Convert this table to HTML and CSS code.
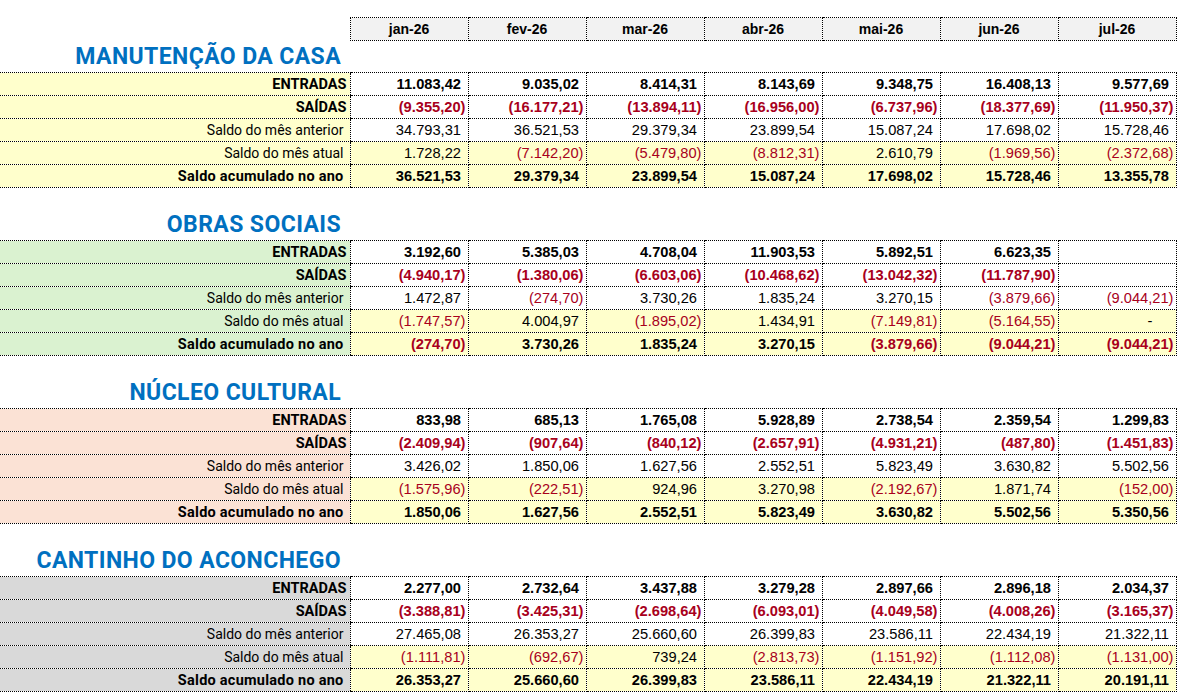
FILE: index.html
```html
<!DOCTYPE html>
<html lang="pt-BR">
<head>
<meta charset="utf-8">
<title>Planilha</title>
<link rel="stylesheet" href="styles.css">
</head>
<body>
<table class="sheet">
  <colgroup>
    <col class="c-label">
    <col class="c-month"><col class="c-month"><col class="c-month"><col class="c-month"><col class="c-month"><col class="c-month"><col class="c-month">
  </colgroup>
  <thead>
    <tr class="hdr">
      <td class="corner"></td>
      <th>jan-26</th><th>fev-26</th><th>mar-26</th><th>abr-26</th><th>mai-26</th><th>jun-26</th><th>jul-26</th>
    </tr>
  </thead>

  <tbody class="sec sec-yellow">
    <tr class="title-row"><td class="title">MANUTENÇÃO DA CASA</td><td colspan="7"></td></tr>
    <tr class="row"><td class="lbl strong">ENTRADAS</td>
      <td class="v b pos">11.083,42</td><td class="v b pos">9.035,02</td><td class="v b pos">8.414,31</td><td class="v b pos">8.143,69</td><td class="v b pos">9.348,75</td><td class="v b pos">16.408,13</td><td class="v b pos">9.577,69</td></tr>
    <tr class="row"><td class="lbl strong">SAÍDAS</td>
      <td class="v b neg">(9.355,20)</td><td class="v b neg">(16.177,21)</td><td class="v b neg">(13.894,11)</td><td class="v b neg">(16.956,00)</td><td class="v b neg">(6.737,96)</td><td class="v b neg">(18.377,69)</td><td class="v b neg">(11.950,37)</td></tr>
    <tr class="row"><td class="lbl">Saldo do mês anterior</td>
      <td class="v pos">34.793,31</td><td class="v pos">36.521,53</td><td class="v pos">29.379,34</td><td class="v pos">23.899,54</td><td class="v pos">15.087,24</td><td class="v pos">17.698,02</td><td class="v pos">15.728,46</td></tr>
    <tr class="row hl"><td class="lbl">Saldo do mês atual</td>
      <td class="v pos">1.728,22</td><td class="v neg">(7.142,20)</td><td class="v neg">(5.479,80)</td><td class="v neg">(8.812,31)</td><td class="v pos">2.610,79</td><td class="v neg">(1.969,56)</td><td class="v neg">(2.372,68)</td></tr>
    <tr class="row hl"><td class="lbl semi">Saldo acumulado no ano</td>
      <td class="v b pos">36.521,53</td><td class="v b pos">29.379,34</td><td class="v b pos">23.899,54</td><td class="v b pos">15.087,24</td><td class="v b pos">17.698,02</td><td class="v b pos">15.728,46</td><td class="v b pos">13.355,78</td></tr>
  </tbody>

  <tbody class="sec sec-green">
    <tr class="gap"><td colspan="8"></td></tr>
    <tr class="title-row"><td class="title">OBRAS SOCIAIS</td><td colspan="7"></td></tr>
    <tr class="row"><td class="lbl strong">ENTRADAS</td>
      <td class="v b pos">3.192,60</td><td class="v b pos">5.385,03</td><td class="v b pos">4.708,04</td><td class="v b pos">11.903,53</td><td class="v b pos">5.892,51</td><td class="v b pos">6.623,35</td><td class="v b pos"></td></tr>
    <tr class="row"><td class="lbl strong">SAÍDAS</td>
      <td class="v b neg">(4.940,17)</td><td class="v b neg">(1.380,06)</td><td class="v b neg">(6.603,06)</td><td class="v b neg">(10.468,62)</td><td class="v b neg">(13.042,32)</td><td class="v b neg">(11.787,90)</td><td class="v b neg"></td></tr>
    <tr class="row"><td class="lbl">Saldo do mês anterior</td>
      <td class="v pos">1.472,87</td><td class="v neg">(274,70)</td><td class="v pos">3.730,26</td><td class="v pos">1.835,24</td><td class="v pos">3.270,15</td><td class="v neg">(3.879,66)</td><td class="v neg">(9.044,21)</td></tr>
    <tr class="row hl"><td class="lbl">Saldo do mês atual</td>
      <td class="v neg">(1.747,57)</td><td class="v pos">4.004,97</td><td class="v neg">(1.895,02)</td><td class="v pos">1.434,91</td><td class="v neg">(7.149,81)</td><td class="v neg">(5.164,55)</td><td class="v dash">-</td></tr>
    <tr class="row hl"><td class="lbl semi">Saldo acumulado no ano</td>
      <td class="v b neg">(274,70)</td><td class="v b pos">3.730,26</td><td class="v b pos">1.835,24</td><td class="v b pos">3.270,15</td><td class="v b neg">(3.879,66)</td><td class="v b neg">(9.044,21)</td><td class="v b neg">(9.044,21)</td></tr>
  </tbody>

  <tbody class="sec sec-salmon">
    <tr class="gap"><td colspan="8"></td></tr>
    <tr class="title-row"><td class="title">NÚCLEO CULTURAL</td><td colspan="7"></td></tr>
    <tr class="row"><td class="lbl strong">ENTRADAS</td>
      <td class="v b pos">833,98</td><td class="v b pos">685,13</td><td class="v b pos">1.765,08</td><td class="v b pos">5.928,89</td><td class="v b pos">2.738,54</td><td class="v b pos">2.359,54</td><td class="v b pos">1.299,83</td></tr>
    <tr class="row"><td class="lbl strong">SAÍDAS</td>
      <td class="v b neg">(2.409,94)</td><td class="v b neg">(907,64)</td><td class="v b neg">(840,12)</td><td class="v b neg">(2.657,91)</td><td class="v b neg">(4.931,21)</td><td class="v b neg">(487,80)</td><td class="v b neg">(1.451,83)</td></tr>
    <tr class="row"><td class="lbl">Saldo do mês anterior</td>
      <td class="v pos">3.426,02</td><td class="v pos">1.850,06</td><td class="v pos">1.627,56</td><td class="v pos">2.552,51</td><td class="v pos">5.823,49</td><td class="v pos">3.630,82</td><td class="v pos">5.502,56</td></tr>
    <tr class="row hl"><td class="lbl">Saldo do mês atual</td>
      <td class="v neg">(1.575,96)</td><td class="v neg">(222,51)</td><td class="v pos">924,96</td><td class="v pos">3.270,98</td><td class="v neg">(2.192,67)</td><td class="v pos">1.871,74</td><td class="v neg">(152,00)</td></tr>
    <tr class="row hl"><td class="lbl semi">Saldo acumulado no ano</td>
      <td class="v b pos">1.850,06</td><td class="v b pos">1.627,56</td><td class="v b pos">2.552,51</td><td class="v b pos">5.823,49</td><td class="v b pos">3.630,82</td><td class="v b pos">5.502,56</td><td class="v b pos">5.350,56</td></tr>
  </tbody>

  <tbody class="sec sec-gray">
    <tr class="gap"><td colspan="8"></td></tr>
    <tr class="title-row"><td class="title">CANTINHO DO ACONCHEGO</td><td colspan="7"></td></tr>
    <tr class="row"><td class="lbl strong">ENTRADAS</td>
      <td class="v b pos">2.277,00</td><td class="v b pos">2.732,64</td><td class="v b pos">3.437,88</td><td class="v b pos">3.279,28</td><td class="v b pos">2.897,66</td><td class="v b pos">2.896,18</td><td class="v b pos">2.034,37</td></tr>
    <tr class="row"><td class="lbl strong">SAÍDAS</td>
      <td class="v b neg">(3.388,81)</td><td class="v b neg">(3.425,31)</td><td class="v b neg">(2.698,64)</td><td class="v b neg">(6.093,01)</td><td class="v b neg">(4.049,58)</td><td class="v b neg">(4.008,26)</td><td class="v b neg">(3.165,37)</td></tr>
    <tr class="row"><td class="lbl">Saldo do mês anterior</td>
      <td class="v pos">27.465,08</td><td class="v pos">26.353,27</td><td class="v pos">25.660,60</td><td class="v pos">26.399,83</td><td class="v pos">23.586,11</td><td class="v pos">22.434,19</td><td class="v pos">21.322,11</td></tr>
    <tr class="row hl"><td class="lbl">Saldo do mês atual</td>
      <td class="v neg">(1.111,81)</td><td class="v neg">(692,67)</td><td class="v pos">739,24</td><td class="v neg">(2.813,73)</td><td class="v neg">(1.151,92)</td><td class="v neg">(1.112,08)</td><td class="v neg">(1.131,00)</td></tr>
    <tr class="row hl"><td class="lbl semi">Saldo acumulado no ano</td>
      <td class="v b pos">26.353,27</td><td class="v b pos">25.660,60</td><td class="v b pos">26.399,83</td><td class="v b pos">23.586,11</td><td class="v b pos">22.434,19</td><td class="v b pos">21.322,11</td><td class="v b pos">20.191,11</td></tr>
  </tbody>
</table>
</body>
</html>
```

FILE: styles.css
```css
html, body {
  margin: 0;
  padding: 0;
  background: #ffffff;
}

body {
  font-family: Roboto, "Liberation Sans", Arial, sans-serif;
  color: #000;
  padding-top: 17px;
}

.sheet {
  border-collapse: collapse;
  table-layout: fixed;
  width: 1176px;
}

.c-label { width: 350px; }
.c-month { width: 118px; }

.sheet td,
.sheet th {
  padding: 0;
  white-space: nowrap;
  overflow: hidden;
}

/* header */
.hdr { height: 23px; }
.hdr th {
  background: #f2f2f2;
  border: 1px dotted #000;
  font-family: "Liberation Sans", Arial, sans-serif;
  font-weight: bold;
  font-size: 14px;
  text-align: center;
  vertical-align: middle;
}

/* section titles */
.title-row { height: 32px; }
.gap { height: 21px; }
.title {
  text-align: right;
  vertical-align: bottom;
  padding: 0 9px 1px 0 !important;
  font-family: Roboto, "Liberation Sans", sans-serif;
  font-weight: 700;
  font-size: 23px;
  letter-spacing: 0.4px;
  line-height: 28px;
  color: #0070c0;
  overflow: visible !important;
}

/* data rows */
.row { height: 23px; }
.row td {
  border-top: 1px dotted #000;
  border-bottom: 1px dotted #000;
  vertical-align: middle;
  line-height: 17px;
}

.lbl {
  text-align: right;
  padding-right: 6px !important;
  font-family: Roboto, "Liberation Sans", sans-serif;
  font-size: 14px;
}
.lbl.strong {
  font-weight: 700;
  font-size: 14.5px;
  padding-right: 3px !important;
}
.lbl.semi {
  font-weight: 700;
  font-size: 14.5px;
  letter-spacing: 0.25px;
}

.v {
  border-left: 1px dotted #000;
  border-right: 1px dotted #000;
  text-align: right;
  font-family: "Liberation Sans", Arial, sans-serif;
  font-size: 14.67px;
  background: #fff;
}
.v.b { font-weight: bold; }
.v.pos { padding-right: 6.5px !important; }
.v.neg { padding-right: 2px !important; color: #a8001c; }
.v.dash { padding-right: 23px !important; }

.row.hl .v { background: #ffffcc; }

/* section label fills */
.sec-yellow .lbl { background: #ffffcc; }
.sec-green .lbl { background: #daf2d0; }
.sec-salmon .lbl { background: #fbe2d5; }
.sec-gray .lbl { background: #d9d9d9; }
```
